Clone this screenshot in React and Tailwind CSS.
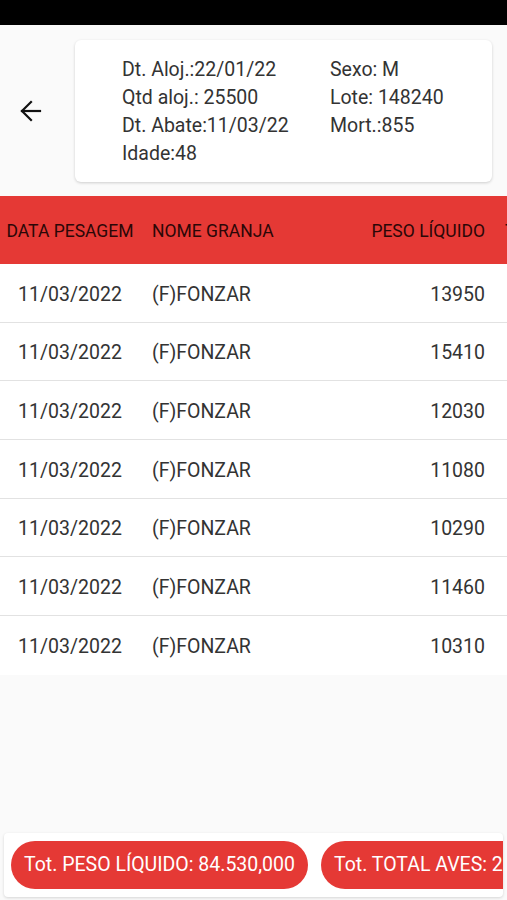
import React from 'react';

const rows = [
  { data: '11/03/2022', granja: '(F)FONZAR', peso: '13950' },
  { data: '11/03/2022', granja: '(F)FONZAR', peso: '15410' },
  { data: '11/03/2022', granja: '(F)FONZAR', peso: '12030' },
  { data: '11/03/2022', granja: '(F)FONZAR', peso: '11080' },
  { data: '11/03/2022', granja: '(F)FONZAR', peso: '10290' },
  { data: '11/03/2022', granja: '(F)FONZAR', peso: '11460' },
  { data: '11/03/2022', granja: '(F)FONZAR', peso: '10310' },
];

const App = () => {
  return (
    <div
      className="h-[900px] w-[507px] overflow-hidden bg-[#fafafa] flex flex-col"
      style={{ fontFamily: 'Roboto, "Liberation Sans", sans-serif' }}
    >
      {/* status bar */}
      <div className="h-[25px] bg-black shrink-0" />

      {/* lot info */}
      <div className="flex items-center pt-[15px] pb-[14px]">
        <button className="w-[75px] h-[142px] flex items-center pl-[20px]">
          <svg width="22" height="22" viewBox="0 0 22 22" fill="none" stroke="#111" strokeWidth="2.2" strokeLinecap="square">
            <path d="M2 11h18" />
            <path d="M11 2l-9 9 9 9" />
          </svg>
        </button>
        <div className="w-[417px] h-[142px] bg-white rounded-[6px] shadow-[0_1px_3px_rgba(0,0,0,0.18)] pl-[47px] pt-[16px] pb-[14px] flex text-[19.5px] leading-[28px] text-[#333]">
          <div className="w-[208px]">
            <div>Dt. Aloj.:22/01/22</div>
            <div>Qtd aloj.: 25500</div>
            <div>Dt. Abate:11/03/22</div>
            <div>Idade:48</div>
          </div>
          <div>
            <div>Sexo: M</div>
            <div>Lote: 148240</div>
            <div>Mort.:855</div>
          </div>
        </div>
      </div>

      {/* table */}
      <div className="overflow-hidden">
        <div className="w-[700px]">
          <div className="flex items-center h-[68px] pt-[2px] bg-[#e53935] text-[17.5px] text-[#2b0707]">
            <div className="w-[140px] text-center whitespace-nowrap">DATA PESAGEM</div>
            <div className="w-[200px] pl-3">NOME GRANJA</div>
            <div className="w-[155px] text-right pr-[10px]">PESO LÍQUIDO</div>
            <div className="pl-[10px] whitespace-nowrap">TOTAL AVES</div>
          </div>
          {rows.map((r, i) => (
            <div
              key={i}
              className={`flex items-center h-[58.7px] pt-[3px] bg-white text-[19.5px] text-[#333] ${i < rows.length - 1 ? 'border-b border-[#e2e2e2]' : ''}`}
            >
              <div className="w-[140px] text-center">{r.data}</div>
              <div className="w-[200px] pl-3">{r.granja}</div>
              <div className="w-[155px] text-right pr-[10px]">{r.peso}</div>
              <div className="pl-[10px]"></div>
            </div>
          ))}
        </div>
      </div>

      <div className="flex-1" />

      {/* totals */}
      <div className="mx-[4px] mb-[3px] h-[64px] bg-white rounded-[4px] shadow-[0_1px_3px_rgba(0,0,0,0.15)] overflow-hidden flex items-center gap-[13px] pl-[7px]">
        <div className="shrink-0 h-[48px] rounded-full bg-[#e53935] text-white text-[19.5px] flex items-center px-[13px] whitespace-nowrap">
          Tot. PESO LÍQUIDO: 84.530,000
        </div>
        <div className="shrink-0 h-[48px] rounded-full bg-[#e53935] text-white text-[19.5px] flex items-center px-[13px] whitespace-nowrap">
          Tot. TOTAL AVES: 23.245
        </div>
      </div>
    </div>
  );
};

export default App;
